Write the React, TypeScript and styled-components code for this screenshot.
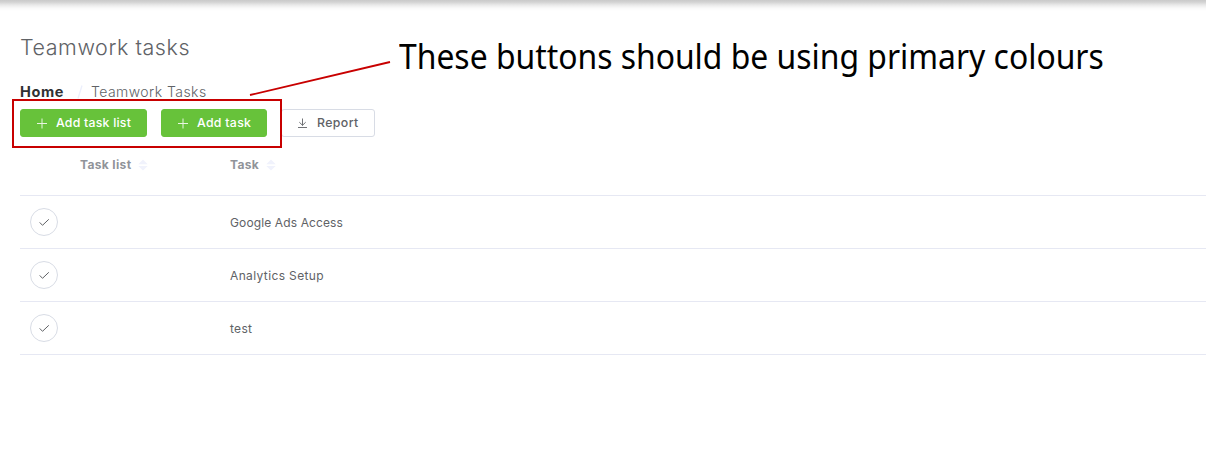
import React from 'react';
import styled, { createGlobalStyle } from 'styled-components';

const GlobalStyle = createGlobalStyle`
  * { box-sizing: border-box; }
  body {
    margin: 0;
    background: #fff;
    color: #606266;
    font-family: Inter, "Liberation Sans", sans-serif;
    overflow: hidden;
  }
`;

const Page = styled.div`
  position: relative;
  height: 471px;
  overflow: hidden;
`;

const HeaderShadow = styled.div`
  height: 12px;
  background: linear-gradient(#c9c9c9 0, #d2d2d2 2px, #e9e9e9 5px, #f9f9f9 8px, #fff 11px);
`;

const Main = styled.main`
  padding-left: 20px;
`;

const Fit = styled.span<{ $track?: number }>`
  display: inline-block;
  white-space: pre;
  letter-spacing: ${(p) => p.$track ?? 0}px;
`;

const Title = styled.h1`
  margin: 19px 0 0;
  font-size: 21.5px;
  font-weight: 300;
  line-height: 32px;
  height: 32px;
`;

const Breadcrumb = styled.nav`
  display: flex;
  align-items: center;
  height: 20px;
  margin-top: 19px;
  font-size: 14px;
  font-weight: 300;
  line-height: 20px;
`;

const HomeLink = styled.a`
  width: 44px;
  color: #303133;
  font-size: 14.5px;
  font-weight: 700;
`;

const Separator = styled.span`
  display: flex;
  width: 27px;
  padding-left: 12px;
`;

const Toolbar = styled.div`
  display: flex;
  gap: 14px;
  margin-top: 7px;
`;

const Button = styled.button<{ $width: number; $plain?: boolean }>`
  display: flex;
  align-items: center;
  width: ${(p) => p.$width}px;
  height: 28px;
  padding: 0 0 0 15px;
  border: 1px solid ${(p) => (p.$plain ? '#d8dce5' : '#67c23a')};
  border-radius: 3px;
  background: ${(p) => (p.$plain ? '#fff' : '#67c23a')};
  color: ${(p) => (p.$plain ? '#606266' : '#fff')};
  font-family: inherit;
  font-size: 12.3px;
  font-weight: 500;
  line-height: 16px;

  svg {
    flex: none;
    margin-right: 8px;
  }
`;

const Table = styled.div`
  display: flex;
  flex-direction: column;
`;

const Row = styled.div<{ $head?: boolean }>`
  display: grid;
  grid-template-columns: 60px 150px 1fr;
  align-items: ${(p) => (p.$head ? 'start' : 'center')};
  height: ${(p) => (p.$head ? 59 : 53)}px;
  padding-top: ${(p) => (p.$head ? 19 : 0)}px;
  border-bottom: 1px solid #e6e8f3;
  color: ${(p) => (p.$head ? '#909399' : '#606266')};
  font-size: 12px;
  font-weight: ${(p) => (p.$head ? 700 : 400)};
  line-height: 17px;
`;

const HeadCell = styled.div`
  display: flex;
  align-items: center;
  gap: 7px;
`;

const DoneButton = styled.button`
  display: flex;
  align-items: center;
  justify-content: center;
  width: 28px;
  height: 28px;
  margin-left: 10px;
  padding: 0;
  border: 1px solid #d8dce5;
  border-radius: 50%;
  background: #fff;
`;

const Highlight = styled.div`
  position: absolute;
  left: 12px;
  top: 99px;
  width: 270px;
  height: 49px;
  border: 2px solid #c80000;
`;

const Pointer = styled.svg`
  position: absolute;
  left: 240px;
  top: 50px;
`;

const Note = styled.div`
  position: absolute;
  left: 399px;
  top: 32px;
  color: #000;
  font-family: "Noto Sans", "Open Sans", sans-serif;
  font-size: 34.5px;
  line-height: 48px;
  white-space: pre;
  transform: scaleX(0.9235);
  transform-origin: 0 0;
`;

const Plus = () => (
  <svg width="12" height="12" viewBox="0 0 12 12" stroke="#fff" strokeWidth="1" opacity=".85">
    <path d="M1 6.5h10M6 1.5v10" />
  </svg>
);

const Download = () => (
  <svg width="12" height="12" viewBox="0 0 12 12" fill="none" stroke="#606266" strokeWidth="0.9">
    <path d="M1 10.5h9M5.5 1.5v7M2.3 5.2l3.2 3.1 3.2-3.1" />
  </svg>
);

const Check = () => (
  <svg width="12" height="12" viewBox="0 0 12 12" fill="none" stroke="#606266" strokeWidth="1">
    <path d="M1.7 6.4l2.8 2.9 6.3-6" />
  </svg>
);

const Sort = () => (
  <svg width="10" height="12" viewBox="0 0 10 12" fill="#f0f2fc">
    <path d="M5 .5l4.7 4.7H.3zM5 11.5L.3 7h9.4z" />
  </svg>
);

const tasks = [
  { name: 'Google Ads Access', track: 0.12 },
  { name: 'Analytics Setup', track: 0.37 },
  { name: 'test', track: 0.3 },
];

export default function App() {
  return (
    <Page>
      <GlobalStyle />
      <HeaderShadow />
      <Main>
        <Title><Fit $track={0.55}>Teamwork tasks</Fit></Title>
        <Breadcrumb>
          <HomeLink><Fit $track={0.6}>Home</Fit></HomeLink>
          <Separator>
            <svg width="8" height="14" viewBox="0 0 8 14" stroke="#eceffc" strokeWidth="1.3"><path d="M2 13.5L6 .5" /></svg>
          </Separator>
          <Fit $track={0.45}>Teamwork Tasks</Fit>
        </Breadcrumb>
        <Toolbar>
          <Button $width={127}><Plus /><Fit $track={0.23}>Add task list</Fit></Button>
          <Button $width={106}><Plus /><Fit $track={0.3}>Add task</Fit></Button>
          <Button $width={94} $plain><Download /><Fit $track={0.4}>Report</Fit></Button>
        </Toolbar>
        <Table>
          <Row $head>
            <span />
            <HeadCell><Fit $track={0.35}>Task list</Fit><Sort /></HeadCell>
            <HeadCell><Fit $track={0.3}>Task</Fit><Sort /></HeadCell>
          </Row>
          {tasks.map((t) => (
            <Row key={t.name}>
              <DoneButton aria-label="Complete"><Check /></DoneButton>
              <span />
              <Fit $track={t.track}>{t.name}</Fit>
            </Row>
          ))}
        </Table>
      </Main>
      <Highlight />
      <Pointer width="160" height="55" stroke="#c80000" strokeWidth="1.8">
        <path d="M10 45L150 12" />
      </Pointer>
      <Note>These buttons should be using primary colours</Note>
    </Page>
  );
}
